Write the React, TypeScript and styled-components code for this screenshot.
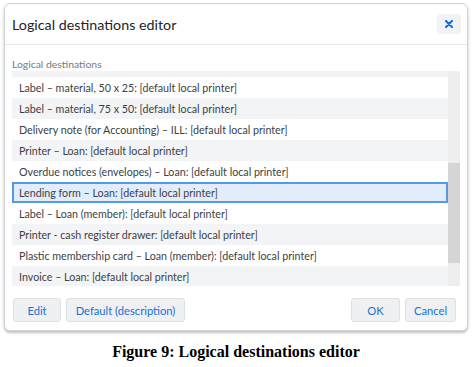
import { useLayoutEffect, useRef } from "react";
import styled, { createGlobalStyle } from "styled-components";

const GlobalStyle = createGlobalStyle`
  body {
    margin: 0;
    background: #ffffff;
    font-family: Lato, "Open Sans", sans-serif;
  }
`;

const Page = styled.div`
  width: 472px;
  padding: 3px 4px 0 4px;
  box-sizing: border-box;
`;

const Dialog = styled.div`
  width: 464px;
  height: 328px;
  box-sizing: border-box;
  border: 1px solid #cfd4da;
  border-radius: 6px;
  box-shadow: 0 2px 3px rgba(0, 0, 0, 0.25);
  background: #fff;
  display: flex;
  flex-direction: column;
`;

const Header = styled.div`
  height: 40px;
  padding: 0 6px 0 7px;
  display: flex;
  align-items: center;
  justify-content: space-between;
  border-bottom: 1px solid #e4e7eb;
`;

const Title = styled.h2`
  margin: 0;
  font-size: 14.3px;
  font-weight: 400;
  color: #212529;
`;

const CloseButton = styled.button`
  width: 24px;
  height: 20px;
  border: none;
  border-radius: 3px;
  background: #f0f2f4;
  color: #1a6fd6;
  display: flex;
  align-items: center;
  justify-content: center;
  padding: 0;
`;

const Body = styled.div`
  padding: 12px 7px 0 7px;
`;

const FieldLabel = styled.div`
  font-size: 10.4px;
  line-height: 14px;
  color: #737a82;
`;

const ListFrame = styled.div`
  height: 215px;
  display: flex;
`;

const Viewport = styled.div`
  flex: 1;
  overflow: hidden;
  background: #fff;
`;

const ScrollTrack = styled.div`
  width: 12px;
  background: #eeeeee;
  display: flex;
  flex-direction: column;
`;

const ScrollThumb = styled.div`
  background: #d5d5d5;
`;

const Row = styled.div<{ $striped: boolean; $selected: boolean }>`
  height: 21px;
  box-sizing: border-box;
  padding-left: 7px;
  display: flex;
  align-items: center;
  font-size: 10.7px;
  color: #3b3f44;
  white-space: nowrap;
  background: ${(p) => (p.$selected ? "#e2edfc" : p.$striped ? "#f3f4f6" : "#ffffff")};
  box-shadow: ${(p) => (p.$selected ? "inset 0 0 0 2px #5597ea" : "none")};
`;

const Footer = styled.div`
  margin-top: auto;
  padding: 0 11px 8px 8px;
  display: flex;
  gap: 5px;
`;

const Spacer = styled.div`
  flex: 1;
`;

const Button = styled.button<{ $width: number }>`
  width: ${(p) => p.$width}px;
  height: 24px;
  border: 1px solid #dde1e5;
  border-radius: 3px;
  background: #eef0f2;
  color: #1a6fd6;
  font-family: Lato, "Open Sans", sans-serif;
  font-size: 11.2px;
  padding: 0;
`;

const Caption = styled.div`
  margin-top: 12px;
  text-align: center;
  font-family: "Liberation Serif", serif;
  font-weight: 700;
  font-size: 16px;
  line-height: 18px;
  color: #000;
`;

const destinations = [
  "Receipt – Loan: [default local printer]",
  "Receipt – Return: [default local printer]",
  "Reservation slip – Loan: [default local printer]",
  "Transit slip – Return: [default local printer]",
  "Label – Spine: [default local printer]",
  "Order form – Acquisition: [default local printer]",
  "Claim letter – Acquisition: [default local printer]",
  "Label – barcode: [default local printer]",
  "Reminder – Loan: [default local printer]",
  "Label – Member A4",
  "Label – material, 50 x 25: [default local printer]",
  "Label – material, 75 x 50: [default local printer]",
  "Delivery note (for Accounting) – ILL: [default local printer]",
  "Printer – Loan: [default local printer]",
  "Overdue notices (envelopes) – Loan: [default local printer]",
  "Lending form – Loan: [default local printer]",
  "Label – Loan (member): [default local printer]",
  "Printer - cash register drawer: [default local printer]",
  "Plastic membership card – Loan (member): [default local printer]",
  "Invoice – Loan: [default local printer]",
  "Payment receipt – Loan: [default local printer]",
  "Statistics report: [default local printer]",
];

const selectedIndex = 15;
const rowHeight = 21;
const viewportHeight = 215;
const scrollTop = 204;

const App = () => {
  const viewportRef = useRef<HTMLDivElement>(null);
  const contentHeight = destinations.length * rowHeight;
  const thumbHeight = (viewportHeight * viewportHeight) / contentHeight;
  const thumbOffset = (scrollTop / contentHeight) * viewportHeight - 3;

  useLayoutEffect(() => {
    if (viewportRef.current) {
      viewportRef.current.scrollTop = scrollTop;
    }
  }, []);

  return (
    <Page>
      <GlobalStyle />
      <Dialog>
        <Header>
          <Title>Logical destinations editor</Title>
          <CloseButton>
            <svg width="8" height="8" viewBox="0 0 8 8">
              <path d="M1 1 L7 7 M7 1 L1 7" stroke="currentColor" strokeWidth="2.2" strokeLinecap="round" />
            </svg>
          </CloseButton>
        </Header>
        <Body>
          <FieldLabel>Logical destinations</FieldLabel>
          <ListFrame>
            <Viewport ref={viewportRef}>
              {destinations.map((text, i) => (
                <Row key={text} $striped={i % 2 === 1} $selected={i === selectedIndex}>
                  {text}
                </Row>
              ))}
            </Viewport>
            <ScrollTrack>
              <ScrollThumb style={{ marginTop: thumbOffset, height: thumbHeight }} />
            </ScrollTrack>
          </ListFrame>
        </Body>
        <Footer>
          <Button $width={48}>Edit</Button>
          <Button $width={119}>Default (description)</Button>
          <Spacer />
          <Button $width={49}>OK</Button>
          <Button $width={51}>Cancel</Button>
        </Footer>
      </Dialog>
      <Caption>Figure 9: Logical destinations editor</Caption>
    </Page>
  );
};

export default App;
